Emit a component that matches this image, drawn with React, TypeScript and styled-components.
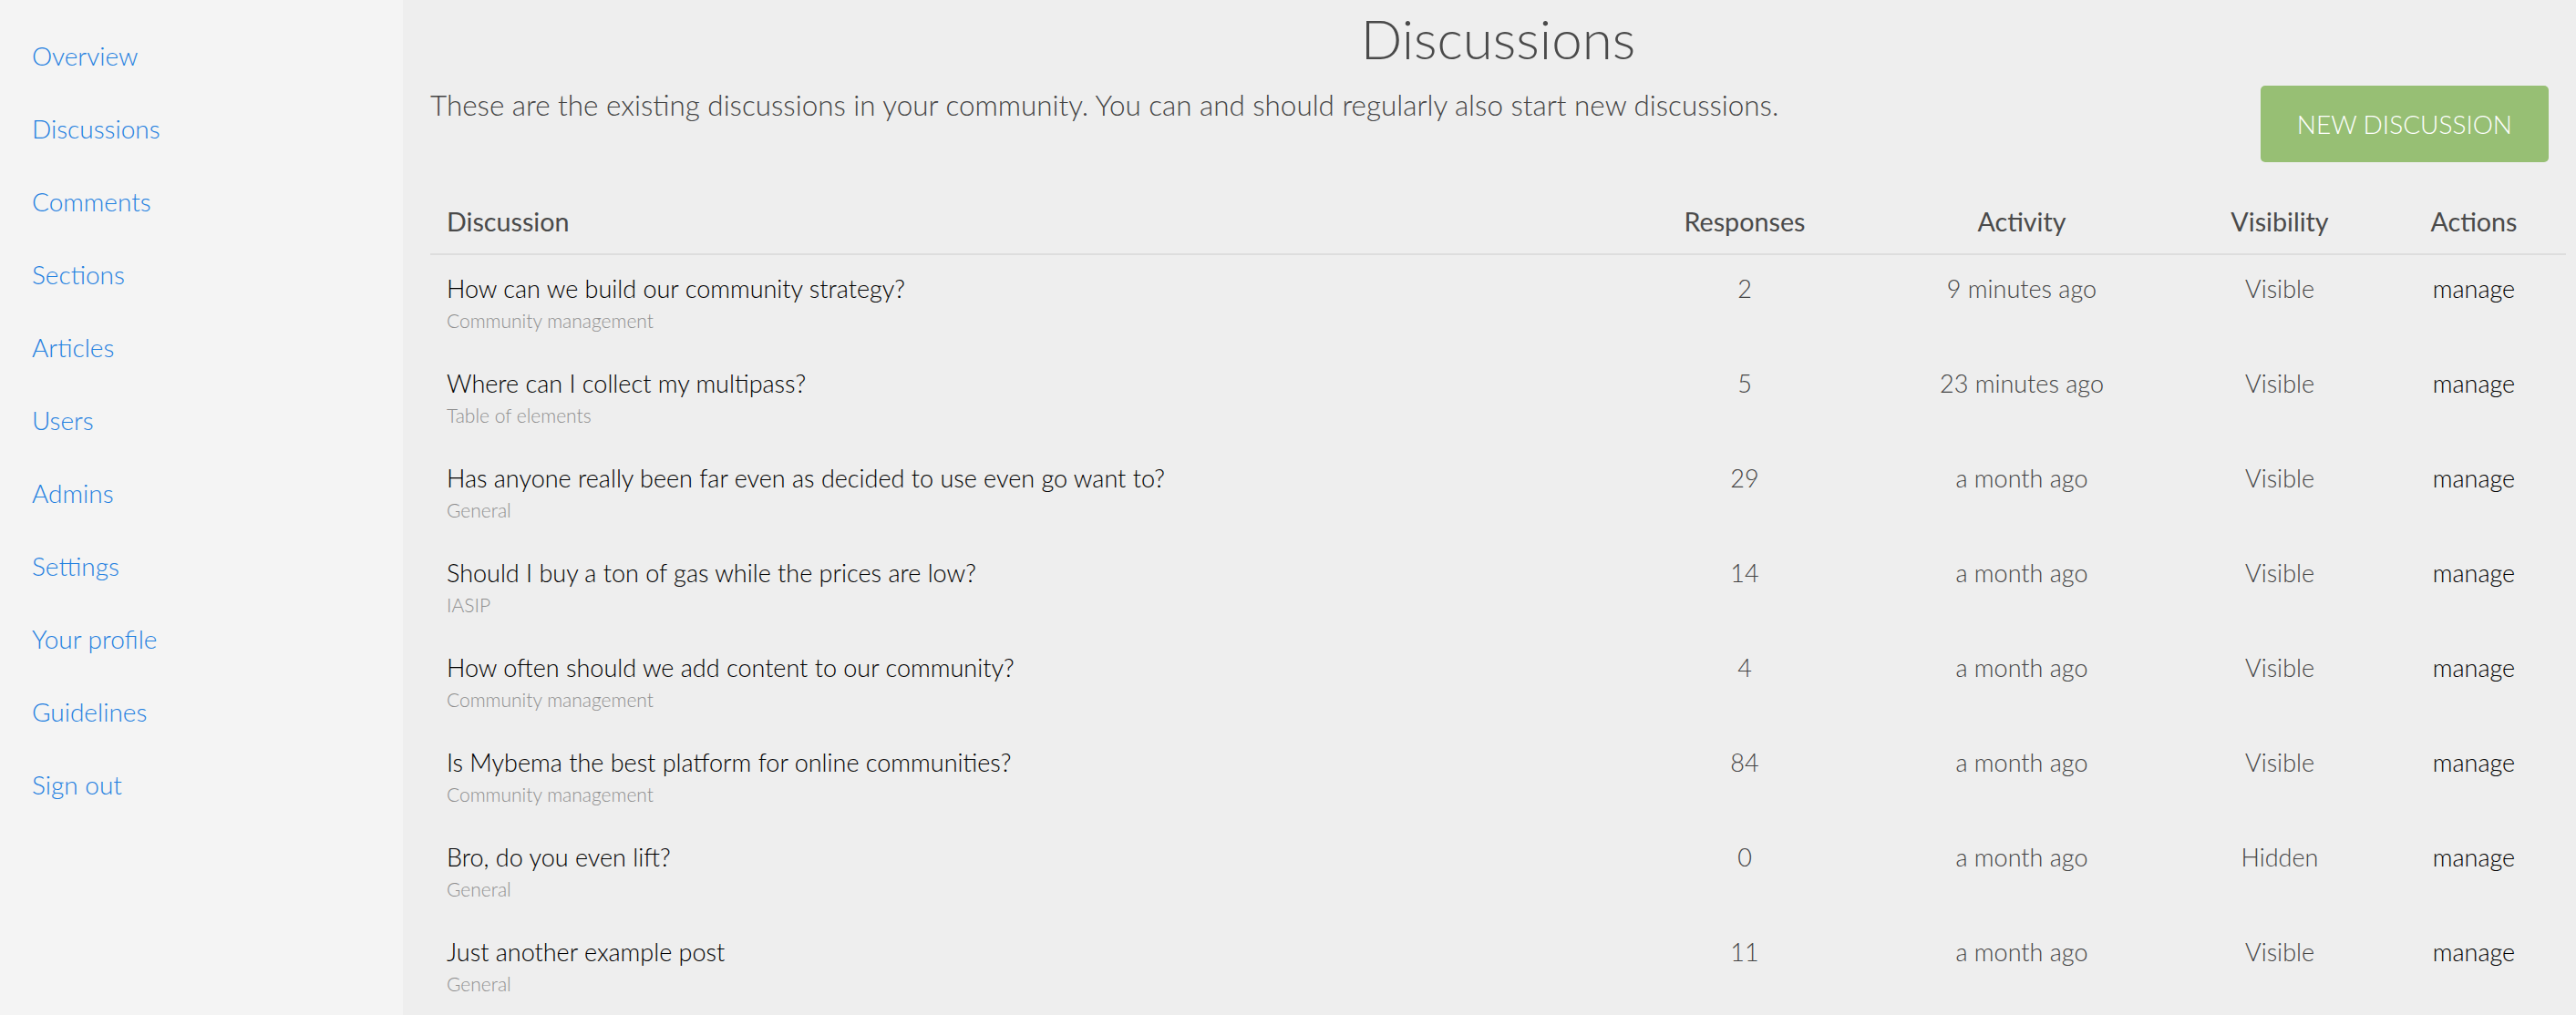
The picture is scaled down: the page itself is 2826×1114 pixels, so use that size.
import React from "react";
import styled, { createGlobalStyle } from "styled-components";

const GlobalStyle = createGlobalStyle`
  html, body {
    margin: 0;
    padding: 0;
    background: #eeeeee;
    font-family: Lato, "Open Sans", "Liberation Sans", sans-serif;
    font-weight: 300;
  }
  * { box-sizing: border-box; }
`;

const Layout = styled.div`
  display: flex;
  min-height: 100vh;
`;

const Sidebar = styled.nav`
  width: 442px;
  flex-shrink: 0;
  background: #f4f4f4;
  padding: 21px 0 0 35px;
  display: flex;
  flex-direction: column;
`;

const NavLink = styled.a`
  display: block;
  font-size: 28px;
  line-height: 80px;
  font-weight: 300;
  color: #1f80e0;
  text-decoration: none;
`;

const Main = styled.main`
  flex: 1;
  background: #eeeeee;
  padding: 6px 11px 0 30px;
`;

const Title = styled.h1`
  margin: 0;
  text-align: center;
  font-size: 60px;
  line-height: 72px;
  font-weight: 300;
  color: #4a4a4a;
`;

const IntroRow = styled.div`
  display: flex;
  justify-content: space-between;
  align-items: flex-start;
  margin-top: 16px;
  padding-right: 19px;
`;

const Intro = styled.p`
  margin: 0;
  padding-top: 3px;
  font-size: 31.4px;
  line-height: 36px;
  font-weight: 300;
  color: #444444;
`;

const PrimaryButton = styled.button`
  height: 84px;
  padding: 0 40px;
  border: none;
  border-radius: 5px;
  background: #97bf74;
  color: #ffffff;
  font-family: inherit;
  font-size: 28px;
  font-weight: 300;
  white-space: nowrap;
  cursor: pointer;
`;

const Table = styled.table`
  width: 100%;
  margin-top: 30px;
  border-collapse: collapse;
  table-layout: fixed;
`;

const HeadCell = styled.th<{ $align?: "left" | "center" }>`
  padding: 18px 18px 18px;
  text-align: ${(p) => p.$align ?? "center"};
  font-size: 28.7px;
  line-height: 34px;
  font-weight: 400;
  color: #4a4a4a;
  border-bottom: 2px solid #dddddd;
`;

const Cell = styled.td<{ $tone?: "muted" | "strong" }>`
  padding: 20px 18px 16px;
  vertical-align: top;
  text-align: center;
  font-size: 27px;
  line-height: 34px;
  font-weight: 300;
  color: ${(p) => (p.$tone === "strong" ? "#000000" : "#444444")};
`;

const TopicCell = styled.td`
  padding: 20px 18px 16px;
  vertical-align: top;
  text-align: left;
`;

const TopicTitle = styled.div`
  font-size: 27px;
  line-height: 34px;
  font-weight: 300;
  color: #000000;
`;

const TopicSection = styled.div`
  margin-top: 2px;
  font-size: 21px;
  line-height: 32px;
  font-weight: 300;
  color: #8e8e8e;
`;

const navItems = [
  "Overview",
  "Discussions",
  "Comments",
  "Sections",
  "Articles",
  "Users",
  "Admins",
  "Settings",
  "Your profile",
  "Guidelines",
  "Sign out",
];

type Row = {
  title: string;
  section: string;
  responses: number;
  activity: string;
  visibility: string;
};

const rows: Row[] = [
  { title: "How can we build our community strategy?", section: "Community management", responses: 2, activity: "9 minutes ago", visibility: "Visible" },
  { title: "Where can I collect my multipass?", section: "Table of elements", responses: 5, activity: "23 minutes ago", visibility: "Visible" },
  { title: "Has anyone really been far even as decided to use even go want to?", section: "General", responses: 29, activity: "a month ago", visibility: "Visible" },
  { title: "Should I buy a ton of gas while the prices are low?", section: "IASIP", responses: 14, activity: "a month ago", visibility: "Visible" },
  { title: "How often should we add content to our community?", section: "Community management", responses: 4, activity: "a month ago", visibility: "Visible" },
  { title: "Is Mybema the best platform for online communities?", section: "Community management", responses: 84, activity: "a month ago", visibility: "Visible" },
  { title: "Bro, do you even lift?", section: "General", responses: 0, activity: "a month ago", visibility: "Hidden" },
  { title: "Just another example post", section: "General", responses: 11, activity: "a month ago", visibility: "Visible" },
];

export default function App() {
  return (
    <>
      <GlobalStyle />
      <Layout>
        <Sidebar>
          {navItems.map((item) => (
            <NavLink key={item} href="#">
              {item}
            </NavLink>
          ))}
        </Sidebar>
        <Main>
          <Title>Discussions</Title>
          <IntroRow>
            <Intro>
              These are the existing discussions in your community. You can and should regularly also start new discussions.
            </Intro>
            <PrimaryButton>NEW DISCUSSION</PrimaryButton>
          </IntroRow>
          <Table>
            <colgroup>
              <col />
              <col style={{ width: 266 }} />
              <col style={{ width: 342 }} />
              <col style={{ width: 224 }} />
              <col style={{ width: 202 }} />
            </colgroup>
            <thead>
              <tr>
                <HeadCell $align="left">Discussion</HeadCell>
                <HeadCell>Responses</HeadCell>
                <HeadCell>Activity</HeadCell>
                <HeadCell>Visibility</HeadCell>
                <HeadCell>Actions</HeadCell>
              </tr>
            </thead>
            <tbody>
              {rows.map((r) => (
                <tr key={r.title}>
                  <TopicCell>
                    <TopicTitle>{r.title}</TopicTitle>
                    <TopicSection>{r.section}</TopicSection>
                  </TopicCell>
                  <Cell>{r.responses}</Cell>
                  <Cell>{r.activity}</Cell>
                  <Cell>{r.visibility}</Cell>
                  <Cell $tone="strong">manage</Cell>
                </tr>
              ))}
            </tbody>
          </Table>
        </Main>
      </Layout>
    </>
  );
}
